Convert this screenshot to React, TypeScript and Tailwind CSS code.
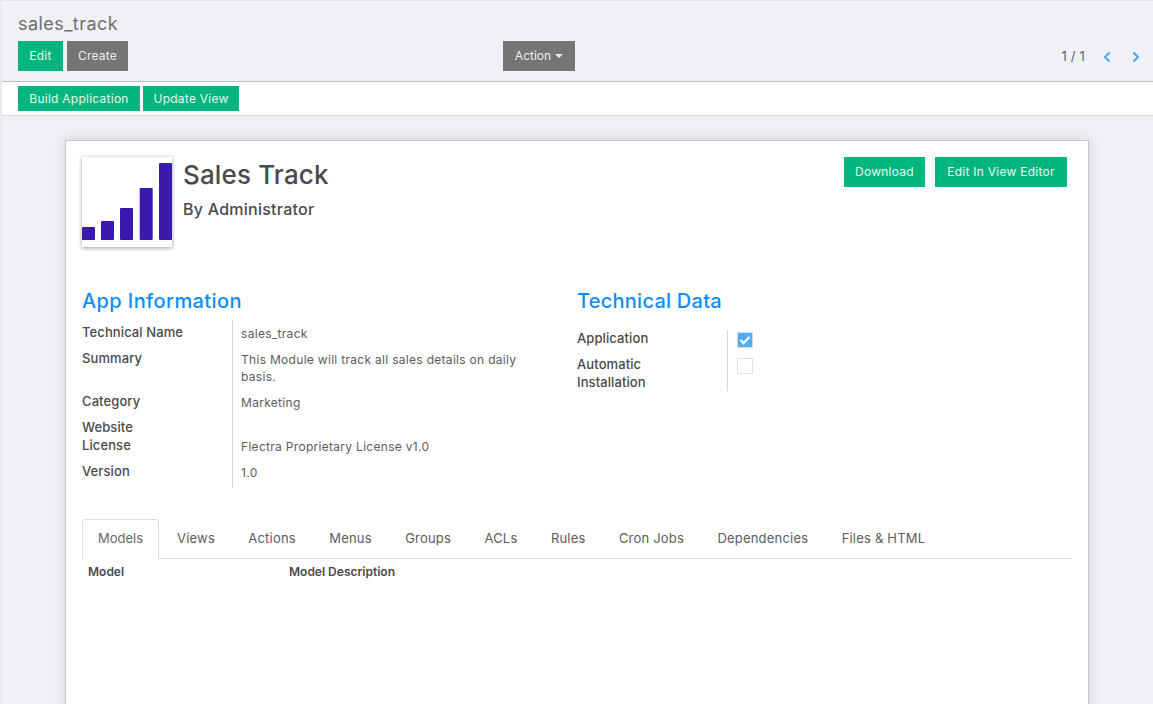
import React from 'react';
import { ChevronLeft, ChevronRight } from 'lucide-react';

const font = "font-['Inter','Noto_Sans',sans-serif]";

const GreenButton = ({ label, className = '' }: { label: string; className?: string }) => (
  <button className={`bg-[#00b67c] text-[#e6f8f1] text-[12px] tracking-[0.25px] flex items-center justify-center ${className}`}>
    {label}
  </button>
);

const infoRows = [
  { label: 'Technical Name', value: 'sales_track', h: 'h-[26px]' },
  { label: 'Summary', value: 'This Module will track all sales details on daily basis.', h: 'h-[43px]' },
  { label: 'Category', value: 'Marketing', h: 'h-[26px]' },
  { label: 'Website', value: '', h: 'h-[18px]' },
  { label: 'License', value: 'Flectra Proprietary License v1.0', h: 'h-[26px]' },
  { label: 'Version', value: '1.0', h: 'h-[29px]' },
];

const tabs = ['Views', 'Actions', 'Menus', 'Groups', 'ACLs', 'Rules', 'Cron Jobs', 'Dependencies', 'Files & HTML'];

const SalesIcon = () => (
  <svg width="90" height="90" viewBox="0 0 90 90" className="block">
    <rect x="0" y="70" width="13" height="13" rx="1" fill="#3a1aae" />
    <rect x="19" y="64" width="13" height="19" rx="1" fill="#3a1aae" />
    <rect x="38" y="51" width="13" height="32" rx="1" fill="#3a1aae" />
    <rect x="57.7" y="31" width="13" height="52" rx="1" fill="#3a1aae" />
    <rect x="77" y="6" width="13" height="77" rx="1" fill="#3a1aae" />
  </svg>
);

const App = () => {
  return (
    <div className={`${font} relative w-[1153px] h-[704px] overflow-hidden bg-[#f0f1f5] border-l-2 border-l-[#e9eaee] border-t border-t-[#e4e5e9] text-[#4c4c4c]`}>
      {/* sliver of the collapsed sidebar */}
      <div className="absolute -left-[2px] top-[134px] w-[1px] h-[45px] bg-[#a5dcff]" />

      <div className="h-[81px] border-b border-[#b9bcc6] pl-4 pr-[9px] flex flex-col">
        <div className="h-[40px] pt-[11px] text-[18px] leading-[24px] tracking-[0.45px] text-[#6f6f72]">sales_track</div>
        <div className="flex items-center">
          <div className="flex gap-1 w-[485px]">
            <GreenButton label="Edit" className="w-[45px] h-[30px]" />
            <button className="w-[61px] h-[30px] bg-[#757575] text-[#ededed] text-[12px] tracking-[0.2px]">Create</button>
          </div>
          <button className="w-[72px] h-[30px] bg-[#757575] text-[#ededed] text-[12px] flex items-center justify-center gap-1">
            Action
            <span className="w-0 h-0 border-x-[4px] border-x-transparent border-t-[4px] border-t-[#ededed]" />
          </button>
          <div className="flex-1 flex items-center justify-end pt-px text-[13px] tracking-[0.2px] text-[#5f5f62]">
            <span className="mr-[14px]">1 / 1</span>
            <ChevronLeft className="w-4 h-4 text-[#4aa8f5] mr-[13px]" strokeWidth={3} />
            <ChevronRight className="w-4 h-4 text-[#4aa8f5]" strokeWidth={3} />
          </div>
        </div>
      </div>

      <div className="h-[34px] bg-white border-b border-[#d5d6dc] pl-4 flex items-center gap-[3px]">
        <GreenButton label="Build Application" className="w-[122px] h-[25px]" />
        <GreenButton label="Update View" className="w-[96px] h-[25px]" />
      </div>

      <div className="pl-[63px] pt-[24px]">
        <div className="relative w-[1024px] h-[600px] bg-white border border-[#c4c5d0] shadow-[0_0_12px_rgba(120,125,150,0.25)] px-4 pt-4">
          <div className="flex justify-between h-[91px]">
            <div className="flex">
              <div className="w-[90px] h-[90px] bg-white shadow-[0_1px_4px_rgba(0,0,0,0.4)]">
                <SalesIcon />
              </div>
              <div className="ml-[11px]">
                <div className="text-[26px] leading-[36px] font-medium tracking-[0.15px] text-[#4a4a4a]">Sales Track</div>
                <div className="mt-[6px] text-[16px] leading-[20px] font-medium tracking-[0.25px] text-[#4a4a4a]">By Administrator</div>
              </div>
            </div>
            <div className="flex gap-[10px] mr-[5px]">
              <GreenButton label="Download" className="w-[81px] h-[30px]" />
              <GreenButton label="Edit In View Editor" className="w-[132px] h-[30px]" />
            </div>
          </div>

          <div className="flex mt-[40px]">
            <div className="w-[495px]">
              <div className="text-[20px] leading-[26px] font-medium tracking-[0.4px] text-[#0b8efc]">App Information</div>
              <div className="mt-[6px] flex flex-col">
                {infoRows.map((row) => (
                  <div key={row.label} className={`flex ${row.h}`}>
                    <div className="w-[150px] pt-[3px] text-[13px] leading-[18px] font-medium tracking-[0.1px] text-[#4a4a4a]">{row.label}</div>
                    <div className="w-[300px] border-l border-[#d9d9dc] pl-2 pr-2 text-[12px] leading-[17px] pt-[5px] tracking-[0.3px] text-[#5c5c60]">
                      {row.value}
                    </div>
                  </div>
                ))}
              </div>
            </div>
            <div>
              <div className="text-[20px] leading-[26px] font-medium tracking-[0.25px] text-[#0b8efc]">Technical Data</div>
              <div className="mt-[16px] flex flex-col">
                <div className="flex h-[26px]">
                  <div className="w-[150px] -mt-px text-[13px] leading-[18px] font-medium tracking-[0.1px] text-[#4a4a4a]">Application</div>
                  <div className="border-l border-[#d9d9dc] pl-[9px] pt-[2px]">
                    <div className="w-[16px] h-[16px] bg-[#4fadfa] border border-[#d9dde2] flex items-center justify-center">
                      <svg width="12" height="10" viewBox="0 0 12 10"><path d="M1.5 5 L4.5 8 L10.5 2" fill="none" stroke="#fff" strokeWidth="2.4" /></svg>
                    </div>
                  </div>
                </div>
                <div className="flex h-[35px]">
                  <div className="w-[150px] -mt-px text-[13px] leading-[18px] font-medium tracking-[0.1px] text-[#4a4a4a]">Automatic<br />Installation</div>
                  <div className="border-l border-[#d9d9dc] pl-[9px] pt-[2px]">
                    <div className="w-[16px] h-[16px] bg-white border border-[#e2e2e4]" />
                  </div>
                </div>
              </div>
            </div>
          </div>

          <div className="mt-[31px] h-[40px] w-[990px] border-b border-[#dcdde0] flex text-[13px] tracking-[0.2px] text-[#5c5c60]">
            <div className="h-[40px] w-[77px] pb-px bg-white border border-b-0 border-[#dcdde0] rounded-t-[3px] flex items-center justify-center tracking-normal text-[#64686f]">Models</div>
            <div className="ml-[1.3px] flex">
              {tabs.map((t) => (
                <div key={t} className="h-[39px] px-[16.7px] flex items-center">{t}</div>
              ))}
            </div>
          </div>
          <div className="flex text-[12px] font-semibold text-[#4a4a4a] pt-[5px] pl-[6px] leading-[16px]">
            <div className="w-[201px]">Model</div>
            <div>Model Description</div>
          </div>
        </div>
      </div>
    </div>
  );
};

export default App;
